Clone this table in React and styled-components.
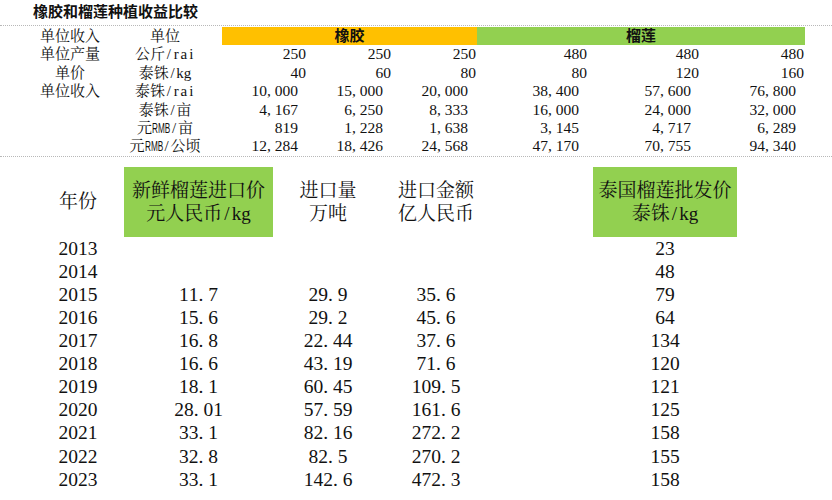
import React from 'react';
import styled, { createGlobalStyle } from 'styled-components';

const FONT = `"Liberation Serif", "Noto Serif CJK SC", "Noto Sans CJK SC", serif`;

const Global = createGlobalStyle`
  html, body { margin: 0; padding: 0; background: #fff; }
  body {
    width: 832px; height: 500px; overflow: hidden;
    font-family: ${FONT};
    color: #111;
  }
`;

const Page = styled.div`
  width: 832px;
  height: 500px;
`;

const Title = styled.h1`
  margin: 0;
  box-sizing: border-box;
  height: 26px;
  padding-left: 33px;
  font-family: "Liberation Sans", "Noto Sans CJK SC", sans-serif;
  font-size: 15px;
  font-weight: 700;
  line-height: 23px;
  border-bottom: 1px dotted #b8b8b8;
`;

/* ---------- top comparison table ---------- */

const TopGrid = styled.div`
  display: grid;
  grid-template-columns: 76px 114px 85px 85px 85px 111px 112px 105px;
  grid-auto-rows: 18.4px;
  padding-left: 32px;
  margin-top: 1px;
  border-bottom: 1px dotted #b8b8b8;
  font-size: 15.5px;
  line-height: 18.4px;
`;

const Label = styled.div`
  text-align: center;
  font-size: 15px;
  white-space: nowrap;
`;

const Band = styled.div`
  grid-column: span 3;
  background: ${(p) => p.$color};
  text-align: center;
  font-family: "Liberation Sans", "Noto Sans CJK SC", sans-serif;
  font-size: 15px;
  font-weight: 700;
`;

const NumCell = styled.div`
  text-align: right;
  padding-right: ${(p) => (p.$comma ? '9px' : '1px')};
  white-space: nowrap;
`;

/* ---------- bottom import table ---------- */

const BottomGrid = styled.div`
  display: grid;
  grid-template-columns: 92px 149px 110px 106px 104px 144px;
  grid-template-rows: 70px;
  grid-auto-rows: 23.1px;
  padding-left: 32px;
  margin-top: 10px;
`;

const Head = styled.div`
  display: flex;
  flex-direction: column;
  align-items: center;
  justify-content: center;
  font-size: 19px;
  line-height: 23px;
  white-space: nowrap;
  background: ${(p) => p.$fill || 'transparent'};
`;

const Val = styled.div`
  text-align: center;
  font-size: 19.5px;
  line-height: 23.1px;
  white-space: nowrap;
`;

/* ---------- half-width glyph helpers (SimSun-like) ---------- */

const Half = styled.span`
  display: inline-block;
  width: 0.5em;
  text-align: ${(p) => (p.$punct ? 'left' : 'center')};
`;

const Narrow = styled.span`
  display: inline-block;
  font-family: "Liberation Sans", sans-serif;
  transform: scaleX(0.55);
  transform-origin: left center;
  margin-right: -15px;
`;

function T({ children }) {
  const s = String(children);
  const out = [];
  let buf = '';
  let i = 0;
  while (i < s.length) {
    if (s.startsWith('RMB', i)) {
      if (buf) { out.push(buf); buf = ''; }
      out.push(<Narrow key={'n' + i}>RMB</Narrow>);
      i += 3;
      continue;
    }
    const ch = s[i];
    if (ch.charCodeAt(0) < 128) {
      if (buf) { out.push(buf); buf = ''; }
      out.push(
        <Half key={i} $punct={ch === ',' || ch === '.'}>
          {ch}
        </Half>
      );
    } else {
      buf += ch;
    }
    i += 1;
  }
  if (buf) out.push(buf);
  return <>{out}</>;
}

const topRows = [
  { a: '单位产量', b: '公斤/rai', v: ['250', '250', '250', '480', '480', '480'], comma: false },
  { a: '单价', b: '泰铢/kg', v: ['40', '60', '80', '80', '120', '160'], comma: false },
  { a: '单位收入', b: '泰铢/rai', v: ['10,000', '15,000', '20,000', '38,400', '57,600', '76,800'], comma: true },
  { a: '', b: '泰铢/亩', v: ['4,167', '6,250', '8,333', '16,000', '24,000', '32,000'], comma: true },
  { a: '', b: '元RMB/亩', v: ['819', '1,228', '1,638', '3,145', '4,717', '6,289'], comma: true },
  { a: '', b: '元RMB/公顷', v: ['12,284', '18,426', '24,568', '47,170', '70,755', '94,340'], comma: true },
];

const years = [
  ['2013', '', '', '', '23'],
  ['2014', '', '', '', '48'],
  ['2015', '11.7', '29.9', '35.6', '79'],
  ['2016', '15.6', '29.2', '45.6', '64'],
  ['2017', '16.8', '22.44', '37.6', '134'],
  ['2018', '16.6', '43.19', '71.6', '120'],
  ['2019', '18.1', '60.45', '109.5', '121'],
  ['2020', '28.01', '57.59', '161.6', '125'],
  ['2021', '33.1', '82.16', '272.2', '158'],
  ['2022', '32.8', '82.5', '270.2', '155'],
  ['2023', '33.1', '142.6', '472.3', '158'],
];

export default function App() {
  return (
    <Page>
      <Global />
      <Title>橡胶和榴莲种植收益比较</Title>

      <TopGrid>
        <Label>单位收入</Label>
        <Label>单位</Label>
        <Band $color="#FFC000">橡胶</Band>
        <Band $color="#92D050">榴莲</Band>
        {topRows.map((r, ri) => (
          <React.Fragment key={ri}>
            <Label>{r.a}</Label>
            <Label><T>{r.b}</T></Label>
            {r.v.map((v, vi) => (
              <NumCell key={vi} $comma={r.comma}><T>{v}</T></NumCell>
            ))}
          </React.Fragment>
        ))}
      </TopGrid>

      <BottomGrid>
        <Head>年份</Head>
        <Head $fill="#92D050">
          <span>新鲜榴莲进口价</span>
          <span>元人民币<T>/kg</T></span>
        </Head>
        <Head>
          <span>进口量</span>
          <span>万吨</span>
        </Head>
        <Head>
          <span>进口金额</span>
          <span>亿人民币</span>
        </Head>
        <Head />
        <Head $fill="#92D050">
          <span>泰国榴莲批发价</span>
          <span>泰铢<T>/kg</T></span>
        </Head>
        {years.map((row) => (
          <React.Fragment key={row[0]}>
            <Val><T>{row[0]}</T></Val>
            <Val><T>{row[1]}</T></Val>
            <Val><T>{row[2]}</T></Val>
            <Val><T>{row[3]}</T></Val>
            <Val />
            <Val><T>{row[4]}</T></Val>
          </React.Fragment>
        ))}
      </BottomGrid>
    </Page>
  );
}
